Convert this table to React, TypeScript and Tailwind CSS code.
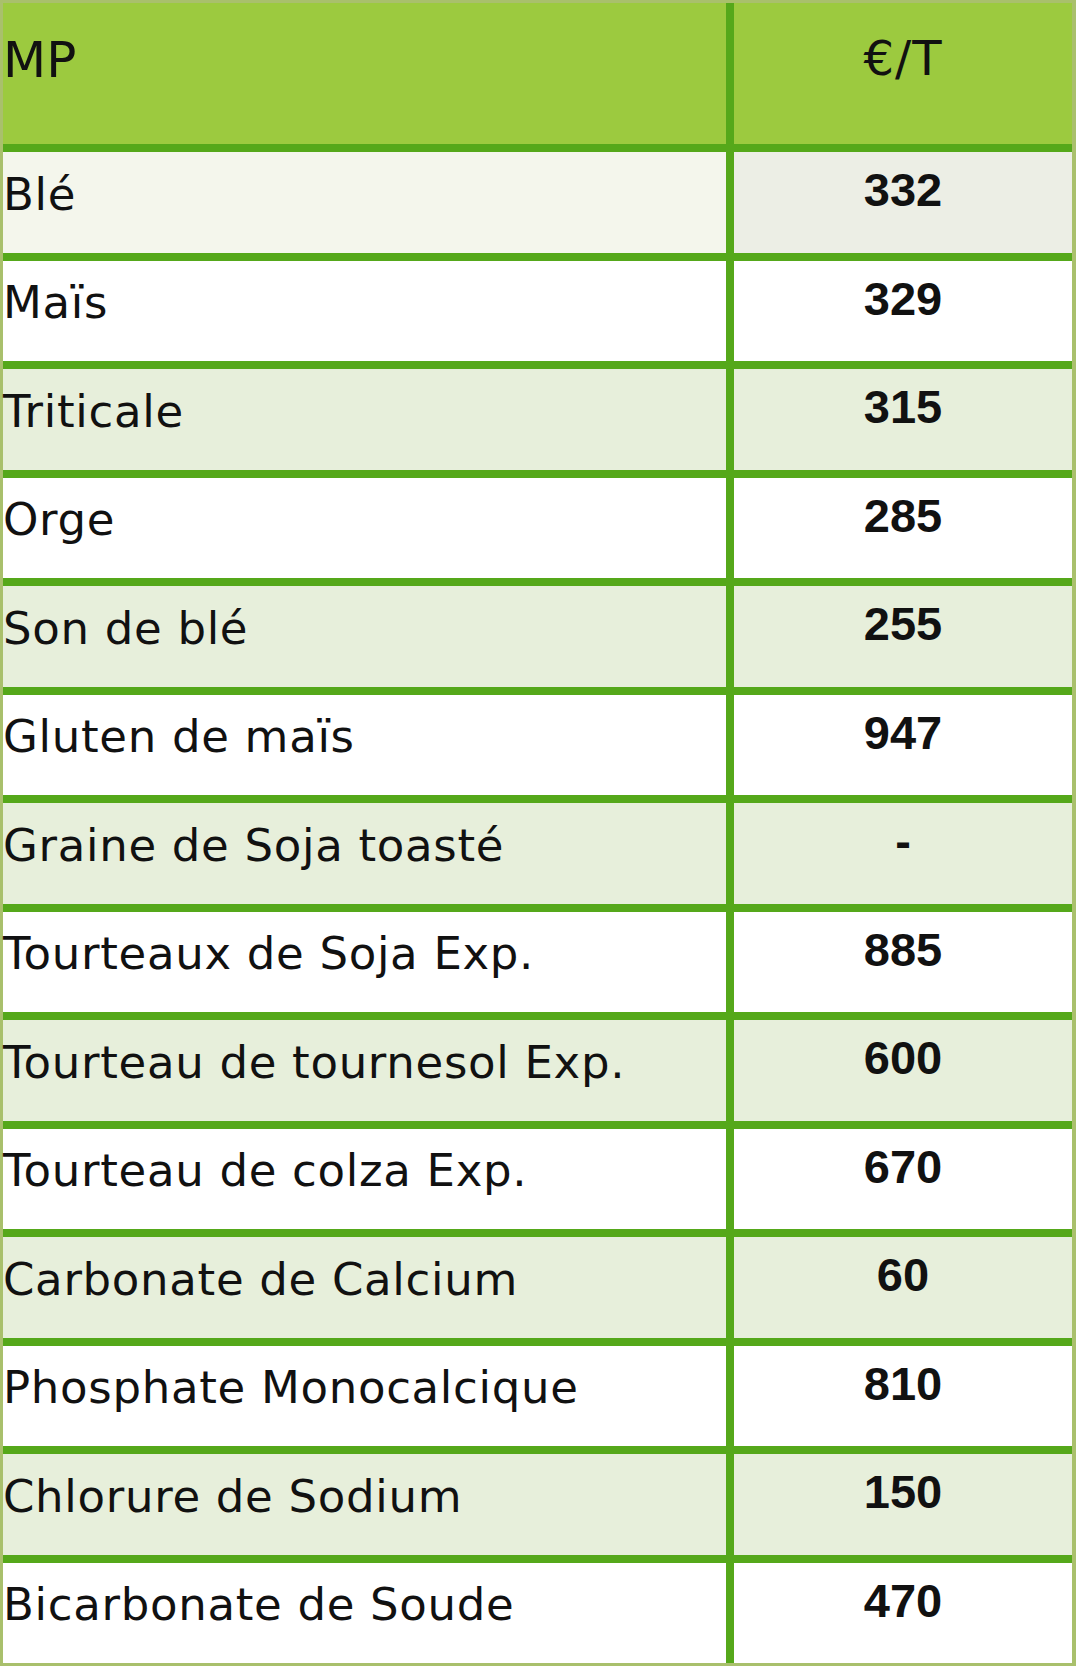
import React from "react";

const rows: [string, string][] = [
  ["Blé", "332"],
  ["Maïs", "329"],
  ["Triticale", "315"],
  ["Orge", "285"],
  ["Son de blé", "255"],
  ["Gluten de maïs", "947"],
  ["Graine de Soja toasté", "-"],
  ["Tourteaux de Soja Exp.", "885"],
  ["Tourteau de tournesol Exp.", "600"],
  ["Tourteau de colza Exp.", "670"],
  ["Carbonate de Calcium", "60"],
  ["Phosphate Monocalcique", "810"],
  ["Chlorure de Sodium", "150"],
  ["Bicarbonate de Soude", "470"],
];

export default function App() {
  return (
    <div className="w-[1077px] h-[1668px] bg-white">
      <div className="w-[1076px] border-l-[3px] border-t-[3px] border-r-[4px] border-b-[3px] border-[#a9c06c]">
        <div className="grid grid-cols-[723px_338px] grid-rows-[141px_repeat(14,100.5px)] gap-[8px] bg-[#55a81a]">
          <div className="bg-[#9cca3f] flex items-center pb-[28px] font-['DejaVu_Sans',sans-serif] text-[50px] leading-none text-[#111]">
            MP
          </div>
          <div className="bg-[#9cca3f] flex items-center justify-center pb-[32px] font-['DejaVu_Sans',sans-serif] text-[48px] tracking-[1px] leading-none text-[#111]">
            €/T
          </div>
          {rows.map(([name, price], i) => {
            const shaded = i % 2 === 0;
            const leftBg = i === 0 ? "bg-[#f4f6ec]" : shaded ? "bg-[#e7efdb]" : "bg-white";
            const rightBg = i === 0 ? "bg-[#eceee5]" : shaded ? "bg-[#e7efdb]" : "bg-white";
            return (
              <React.Fragment key={name}>
                <div className={`${leftBg} flex items-center pb-[16px] font-['DejaVu_Sans',sans-serif] text-[45px] tracking-[0.7px] leading-none text-[#111] whitespace-nowrap`}>
                  {name}
                </div>
                <div className={`${rightBg} flex items-center justify-center pb-[25px] font-['Liberation_Sans',Arial,sans-serif] font-bold text-[47px] leading-none text-[#111]`}>
                  {price}
                </div>
              </React.Fragment>
            );
          })}
        </div>
      </div>
    </div>
  );
}
